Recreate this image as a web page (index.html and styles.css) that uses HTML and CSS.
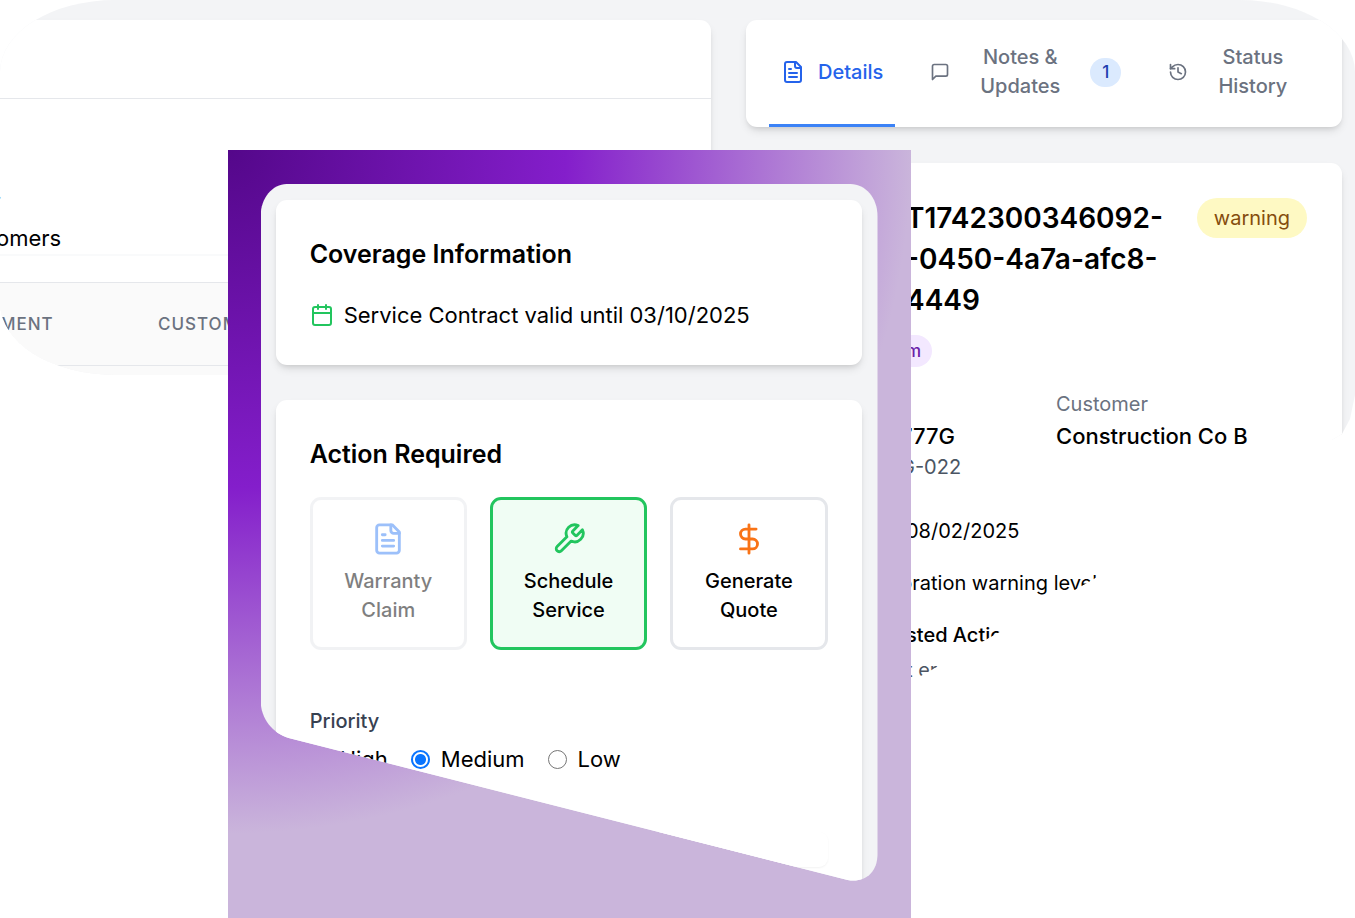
FILE: index.html
```
<!DOCTYPE html>
<html lang="en">
<head>
    <meta charset="UTF-8">
    <meta name="viewport" content="width=device-width, initial-scale=1.0">
    <title>Service Alerts</title>
    <link rel="stylesheet" href="styles.css">
</head>
<body>
    <!-- Shared shapes and icons -->
    <svg class="defs" width="0" height="0" aria-hidden="true">
        <clipPath id="frame-shape" clipPathUnits="objectBoundingBox">
            <path transform="scale(0.0016207 0.0014347)" d="M26 0H590C605 0 617 14 617 32V670C617 689 604 699 587 696L28 554C12 549 0 535 0 516V32C0 14 12 0 26 0Z"/>
        </clipPath>
        <symbol id="icon-file" viewBox="0 0 24 24">
            <path d="M15 2H6a2 2 0 0 0-2 2v16a2 2 0 0 0 2 2h12a2 2 0 0 0 2-2V7Z"/>
            <path d="M14 2v4a2 2 0 0 0 2 2h4M10 9H8M16 13H8M16 17H8"/>
        </symbol>
    </svg>

    <main class="showcase">
        <section class="list-pane">
            <div class="card list-card">
                <div class="list-header"></div>
                <div class="filters">
                    <span class="filter-label">.</span>
                    <div class="filter-value">omers</div>
                </div>
                <table class="alerts-table">
                    <thead>
                        <tr>
                            <th>MENT</th>
                            <th>CUSTOMER</th>
                        </tr>
                    </thead>
                </table>
            </div>
        </section>

        <section class="detail-pane">
            <nav class="card tabs">
                <button class="tab active" type="button">
                    <svg class="icon icon-md"><use href="#icon-file"/></svg>
                    <span>Details</span>
                </button>
                <button class="tab" type="button">
                    <svg class="icon icon-sm" viewBox="0 0 24 24"><path d="M21 15a2 2 0 0 1-2 2H7l-4 4V5a2 2 0 0 1 2-2h14a2 2 0 0 1 2 2z"/></svg>
                    <span>Notes &amp;<br>Updates</span>
                    <span class="count">1</span>
                </button>
                <button class="tab" type="button">
                    <svg class="icon icon-sm" viewBox="0 0 24 24"><path d="M3 12a9 9 0 1 0 9-9 9.750 9.750 0 0 0-6.740 2.740L3 8"/><path d="M3 3v5h5M12 7v5l4 2"/></svg>
                    <span>Status<br>History</span>
                </button>
            </nav>

            <article class="card detail-card">
                <header class="detail-header">
                    <h1>T1742300346092-<br>-0450-4a7a-afc8-<br>4449</h1>
                    <span class="status">warning</span>
                </header>
                <span class="tag">m</span>
                <div class="facts">
                    <div class="tuck">
                        <p class="label">&nbsp;</p>
                        <p class="value">777G</p>
                        <p class="sub">G-022</p>
                    </div>
                    <div>
                        <p class="label">Customer</p>
                        <p class="value">Construction Co B</p>
                    </div>
                </div>
                <p class="date">08/02/2025</p>
                <p class="message tuck">bration warning level</p>
                <p class="message strong">sted Action</p>
                <p class="sub action">t er</p>
            </article>
        </section>

        <section class="spotlight">
            <div class="frame">
                <div class="card panel">
                    <h2>Coverage Information</h2>
                    <p class="coverage">
                        <svg class="icon icon-md" viewBox="0 0 24 24"><path d="M8 2v4M16 2v4M3 10h18"/><rect x="3" y="4" width="18" height="18" rx="2"/></svg>
                        Service Contract valid until 03/10/2025
                    </p>
                </div>

                <form class="card panel actions-panel">
                    <h2>Action Required</h2>
                    <div class="actions">
                        <button class="action-tile" type="button" disabled>
                            <svg class="icon icon-lg blue"><use href="#icon-file"/></svg>
                            <span>Warranty Claim</span>
                        </button>
                        <button class="action-tile selected" type="button">
                            <svg class="icon icon-lg green" viewBox="0 0 24 24"><path d="M14.7 6.3a1 1 0 0 0 0 1.4l1.6 1.6a1 1 0 0 0 1.4 0l3.77-3.77a6 6 0 0 1-7.94 7.94l-6.91 6.91a2.12 2.12 0 0 1-3-3l6.91-6.91a6 6 0 0 1 7.94-7.94l-3.76 3.76z"/></svg>
                            <span>Schedule Service</span>
                        </button>
                        <button class="action-tile" type="button">
                            <svg class="icon icon-lg orange" viewBox="0 0 24 24"><path d="M12 2v20M17 5H9.5a3.5 3.5 0 0 0 0 7h5a3.5 3.5 0 0 1 0 7H6"/></svg>
                            <span>Generate Quote</span>
                        </button>
                    </div>
                    <fieldset class="priority">
                        <legend>Priority</legend>
                        <div class="options">
                            <label><input type="radio" name="priority" value="high">High</label>
                            <label><input type="radio" name="priority" value="medium" checked>Medium</label>
                            <label><input type="radio" name="priority" value="low">Low</label>
                        </div>
                    </fieldset>
                    <input class="date-input" type="text" aria-label="Date">
                </form>
            </div>
        </section>
    </main>
</body>
</html>
```
FILE: styles.css
```
:root {
    --blue: #2563eb;
    --green: #22c55e;
    --gray-100: #f3f4f6;
    --gray-200: #e5e7eb;
    --gray-500: #6b7280;
    --gray-600: #4b5563;
    --gray-700: #374151;
}

* {
    box-sizing: border-box;
}

body {
    margin: 0;
    background: white;
    color: black;
    font-family: Inter, "Liberation Sans", sans-serif;
    font-size: 20px;
    line-height: 29px;
}

h1, h2, p {
    margin: 0;
}

button {
    font: inherit;
    color: inherit;
    background: none;
    border: none;
    padding: 0;
    cursor: pointer;
}

.defs {
    position: absolute;
}

.showcase {
    position: relative;
    display: grid;
    grid-template-columns: 728fr 627fr;
    min-height: 100vh;
    overflow: hidden;
}

.card {
    background: white;
    border-radius: 11px;
    box-shadow: 0 5px 9px -1px rgba(0, 0, 0, 0.1), 0 3px 5px -2px rgba(0, 0, 0, 0.1);
}

.icon {
    flex: none;
    fill: none;
    stroke: currentColor;
    stroke-width: 2;
    stroke-linecap: round;
    stroke-linejoin: round;
}

.icon-sm {
    width: 20px;
    height: 20px;
}

.icon-md {
    width: 24px;
    height: 24px;
}

.icon-lg {
    width: 34px;
    height: 34px;
}

.blue { color: #3b82f6; }
.green { color: var(--green); }
.orange { color: #f97316; }

/* Left: alert list */
.list-pane {
    height: 375px;
    padding: 20px 17px 0 0;
    background: var(--gray-100);
    border-radius: 115px 0 0 115px / 72px 0 0 72px;
    overflow: hidden;
}

.list-card {
    height: 100%;
    background: linear-gradient(white 262px, #fafafa 262px);
    border-radius: 0 11px 0 0;
}

.list-header {
    height: 79px;
    border-bottom: 1px solid var(--gray-200);
}

.filters {
    height: 183px;
    margin-left: -4px;
    padding-top: 83px;
}

.filter-label {
    display: block;
    color: var(--gray-700);
    line-height: 20px;
}

.filter-value {
    margin-top: 20px;
    font-size: 22px;
    line-height: 32px;
    border-bottom: 2px solid #f9fafb;
}

.alerts-table {
    width: 100%;
    table-layout: fixed;
    border-collapse: collapse;
    background: #fafafa;
}

.alerts-table th {
    height: 83px;
    padding: 0;
    color: var(--gray-500);
    font-size: 17px;
    font-weight: 500;
    letter-spacing: 1px;
    text-align: left;
    border-top: 1px solid var(--gray-200);
    border-bottom: 1px solid var(--gray-200);
}

.alerts-table th:first-child {
    width: 158px;
}

/* Right: alert details */
.detail-pane {
    display: flex;
    flex-direction: column;
    gap: 36px;
    padding: 20px 13px 0 18px;
    background: linear-gradient(var(--gray-100) 440px, white 440px);
    border-radius: 0 115px 0 0 / 0 72px 0 0;
    clip-path: polygon(0 0, 100% 0, 100% 395px, calc(100% - 5px) 419px, calc(100% - 13px) 434px, calc(100% - 275px) 587px, calc(100% - 445px) 682px, 0 682px);
    overflow: hidden;
}

.tabs {
    display: flex;
    gap: 23px;
    height: 107px;
    padding-left: 23px;
}

.tab {
    display: flex;
    align-items: center;
    gap: 30px;
    padding: 0 12px;
    color: var(--gray-500);
    font-weight: 500;
    border-bottom: 3px solid transparent;
}

.tab.active {
    gap: 13px;
    color: var(--blue);
    border-bottom-color: #3b82f6;
}

.count {
    padding: 0 12px;
    color: #1e40af;
    background: #dbeafe;
    border-radius: 15px;
    font-size: 17px;
}

.detail-card {
    flex: 1;
    padding: 35px 35px 0 160px;
    border-radius: 11px 11px 0 0;
}

.detail-header {
    display: flex;
    justify-content: space-between;
    align-items: flex-start;
}

.detail-header h1 {
    font-size: 28px;
    font-weight: 600;
    line-height: 41px;
}

.status {
    padding: 6px 17px;
    color: #854d0e;
    background: #fef9c3;
    border-radius: 20px;
    line-height: 28px;
}

.tag {
    display: block;
    width: 26px;
    margin-top: 14px;
    padding-right: 11px;
    color: #6b21a8;
    background: #f3e8ff;
    border-radius: 0 16px 16px 0;
    font-size: 17px;
    font-weight: 500;
    line-height: 32px;
    text-align: right;
}

.facts {
    display: grid;
    grid-template-columns: 150px 1fr;
    margin-top: 23px;
}

.label {
    color: var(--gray-500);
}

.value {
    font-size: 22px;
    font-weight: 500;
    line-height: 34px;
}

.sub {
    color: var(--gray-600);
}

.tuck {
    margin-left: -6px;
}

.date {
    margin-top: 35px;
}

.message {
    margin-top: 23px;
}

.strong {
    font-weight: 500;
}

.action {
    margin-top: 6px;
}

/* Highlighted overlay */
.spotlight {
    position: absolute;
    top: 150px;
    bottom: 0;
    left: 16.8%;
    width: 50.4%;
    display: flex;
    padding: 34px 33px 37px;
    background: radial-gradient(circle farthest-side at top left, #54078a, #841ecb 44%, #cab5db 89%);
}

.frame {
    flex: 1;
    display: flex;
    flex-direction: column;
    gap: 35px;
    padding: 16px 16px 0 15px;
    background: var(--gray-100);
    clip-path: url(#frame-shape);
}

.panel {
    padding: 34px 34px 33px;
}

.panel h2 {
    font-size: 25px;
    font-weight: 600;
    line-height: 41px;
}

.coverage {
    display: flex;
    align-items: center;
    gap: 10px;
    margin-top: 23px;
    font-size: 22px;
    line-height: 34px;
}

.coverage .icon {
    color: var(--green);
}

.actions-panel {
    flex: 1;
    border-radius: 11px 11px 0 0;
}

.actions {
    display: grid;
    grid-template-columns: repeat(3, 1fr);
    gap: 23px;
    margin-top: 22px;
}

.action-tile {
    display: flex;
    flex-direction: column;
    align-items: center;
    gap: 11px;
    padding: 22px;
    font-weight: 500;
    border: 3px solid var(--gray-200);
    border-radius: 11px;
}

.action-tile:disabled {
    opacity: 0.5;
    cursor: not-allowed;
}

.action-tile.selected {
    background: #f0fdf4;
    border-color: var(--green);
}

.priority {
    margin: 57px 0 0;
    padding: 0;
    border: none;
}

.priority legend {
    padding: 0;
    color: var(--gray-700);
    font-weight: 500;
}

.options {
    display: flex;
    gap: 23px;
    margin-top: 6px;
    font-size: 22px;
    line-height: 34px;
}

.options label {
    display: flex;
    align-items: center;
    gap: 11px;
}

.options input {
    appearance: none;
    width: 19px;
    height: 19px;
    margin: 0;
    border: 1px solid #767676;
    border-radius: 50%;
}

.options input:checked {
    border: 2px solid #0a75ff;
    background: radial-gradient(circle, #0a75ff 5px, white 6px);
}

.date-input {
    width: 100%;
    height: 35px;
    margin-top: 56px;
    border: none;
    border-radius: 9px;
    box-shadow: 0 1px 2px rgba(0, 0, 0, 0.05);
}
```
